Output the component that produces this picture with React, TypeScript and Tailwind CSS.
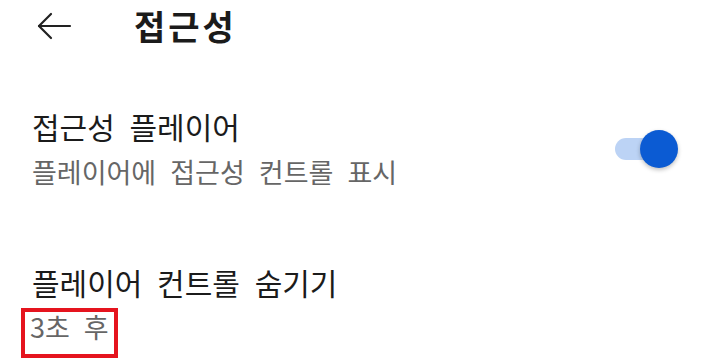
export default function App() {
  const font = { fontFamily: '"Noto Sans CJK KR", "Noto Sans", sans-serif' };
  return (
    <div className="w-[720px] h-[362px] bg-white overflow-hidden text-[#1b1b1b] [word-spacing:8px]" style={font}>
      {/* Header */}
      <div className="flex items-center h-[52px]">
        <svg className="ml-[36px]" width="36" height="30" viewBox="0 0 36 30" fill="none" stroke="#222" strokeWidth="2.2" strokeLinecap="round" strokeLinejoin="round">
          <path d="M34 15H3" />
          <path d="M15 3L3 15l12 12" />
        </svg>
        <h1 className="ml-[62px] text-[34px] font-bold leading-none tracking-[3px]">접근성</h1>
      </div>

      {/* Accessibility player */}
      <div className="flex items-center justify-between pl-[32px] pr-[42px] mt-[53px]">
        <div>
          <div className="text-[30px] leading-[42px]">접근성 플레이어</div>
          <div className="mt-[5px] text-[27px] leading-[40px] text-[#666]">플레이어에 접근성 컨트롤 표시</div>
        </div>
        <div className="relative w-[63px] h-[40px] flex items-center">
          <div className="w-[46px] h-[22px] rounded-full bg-[#bcd3f5]" />
          <div className="absolute right-0 top-[1px] w-[38px] h-[38px] rounded-full bg-[#0b5bd3] shadow-[0_2px_4px_rgba(0,0,0,0.25)]" />
        </div>
      </div>

      {/* Hide player controls */}
      <div className="pl-[32px] mt-[69px]">
        <div className="text-[30px] leading-[42px]">플레이어 컨트롤 숨기기</div>
        <div className="-ml-[11px] mt-[5px] inline-block border-[4px] border-[#e5141e] px-[5px] pb-[13px] text-[27px] leading-[29px] text-[#666]">
          3초 후
        </div>
      </div>
    </div>
  );
}
